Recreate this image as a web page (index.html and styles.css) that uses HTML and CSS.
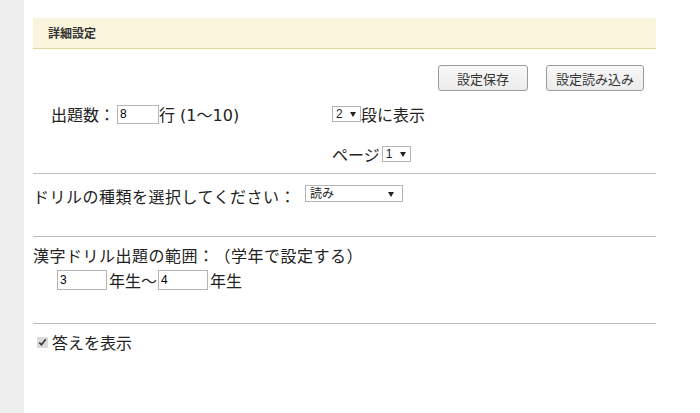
FILE: index.html
```html
<!DOCTYPE html>
<html>
<head>
    <meta charset="utf-8">
    <title>詳細設定</title>
    <link rel="stylesheet" href="styles.css">
</head>
<body>
    <div class="side"></div>
    <div class="main">
        <div class="header">詳細設定</div>

        <div class="tools">
            <button class="btn btn-save">設定保存</button>
            <button class="btn btn-load">設定読み込み</button>
        </div>

        <div class="opts">
            <div class="cell">出題数：<input type="text" class="num" value="8">行 (1～10)</div>
            <div class="cell"><span class="pick pick-col"><select class="sel"><option>2</option></select></span>段に表示</div>
            <div class="cell"></div>
            <div class="cell">ページ<span class="pick pick-page"><select class="sel"><option>1</option></select></span></div>
        </div>

        <div class="section drill">
            ドリルの種類を選択してください：
            <span class="pick pick-wide"><select class="sel"><option>読み</option></select></span>
        </div>

        <div class="section range">
            <div class="range-title">漢字ドリル出題の範囲：（学年で設定する）</div>
            <div class="years">
                <input type="text" class="year" value="3"><span class="unit">年生～</span><input type="text" class="year" value="4"><span class="unit">年生</span>
            </div>
        </div>

        <div class="section answer">
            <label><input type="checkbox" class="chk" checked>答えを表示</label>
        </div>
    </div>
</body>
</html>
```

FILE: styles.css
```css
body {
    margin: 0;
    display: flex;
    min-height: 413px;
    background: #fff;
    color: #222;
    font-family: 'DejaVu Sans', 'Noto Sans CJK JP', sans-serif;
    font-size: 16px;
    text-spacing-trim: space-all;
}
.side {
    width: 24px;
    background: #eeeeee;
}
.main {
    width: 623px;
    padding: 18px 0 0 9px;
}
.header {
    height: 30px;
    line-height: 30px;
    padding-left: 15px;
    background: #f8f5dc;
    border-bottom: 1px solid #e6d69a;
    font-family: 'Noto Sans CJK JP', sans-serif;
    font-size: 12px;
    font-weight: bold;
    color: #333;
}
.tools {
    display: flex;
    justify-content: flex-end;
    gap: 18px;
    padding-right: 12px;
    margin-top: 16px;
}
.btn {
    height: 26px;
    border: 1px solid #9a9a9a;
    border-radius: 3px;
    background: linear-gradient(#f8f8f8, #ececec);
    font-family: 'Noto Sans CJK JP', sans-serif;
    font-size: 13px;
    color: #333;
    padding: 0;
}
.btn-save { width: 90px; }
.btn-load { width: 98px; }
.opts {
    display: grid;
    grid-template-columns: 281px 1fr;
    grid-template-rows: 22px 22px;
    row-gap: 18px;
    padding-left: 18px;
    margin-top: 12px;
}
.cell {
    display: flex;
    align-items: center;
    white-space: nowrap;
}
input.num, input.year {
    box-sizing: border-box;
    border: 1px solid #b5b5b5;
    font-family: 'Liberation Sans', sans-serif;
    font-size: 12px;
    padding: 0 2px;
    margin: 0;
}
.num {
    width: 42px;
    height: 19px;
    margin-left: 2px !important;
}
.year {
    width: 50px;
    height: 20px;
}
.unit {
    padding: 0 1px 0 2px;
}
.pick {
    position: relative;
    display: inline-flex;
}
.pick::after {
    content: "";
    position: absolute;
    right: 5px;
    top: 50%;
    margin-top: -2px;
    border-left: 3px solid transparent;
    border-right: 3px solid transparent;
    border-top: 5px solid #222;
    pointer-events: none;
}
.sel {
    -webkit-appearance: none;
    appearance: none;
    box-sizing: border-box;
    height: 16px;
    border: 1px solid #b5b5b5;
    border-radius: 0;
    background: #fff;
    color: #222;
    font-family: 'Liberation Sans', 'Noto Sans CJK JP', sans-serif;
    font-size: 12px;
    line-height: 14px;
    padding: 0 0 0 3px;
    margin: 0;
}
.pick-col .sel, .pick-page .sel {
    width: 29px;
}
.pick-page {
    margin-left: 2px;
}
.pick-wide {
    margin-left: 9px;
    margin-top: 1px;
    letter-spacing: 0;
}
.pick-wide .sel {
    width: 98px;
    height: 17px;
    padding-left: 4px;
}
.pick-wide::after {
    right: 9px;
}
.section {
    border-top: 1px solid #bdbdbd;
    margin-top: 8px;
}
.drill {
    height: 63px;
    display: flex;
    align-items: flex-start;
    padding-top: 10px;
    box-sizing: border-box;
    font-family: 'Noto Sans CJK JP', sans-serif;
    letter-spacing: 0.5px;
}
.range {
    height: 87px;
    padding-top: 6px;
    box-sizing: border-box;
    margin-top: 0;
}
.range-title {
    letter-spacing: 0.5px;
}
.years {
    display: flex;
    align-items: center;
    padding-left: 24px;
    margin-top: 1px;
}
.answer {
    margin-top: 0;
    padding-top: 6px;
}
.answer label {
    display: flex;
    align-items: center;
}
.chk {
    width: 11px;
    height: 11px;
    margin: 0 4px 0 4px;
    accent-color: #dcdcdc;
}
```
